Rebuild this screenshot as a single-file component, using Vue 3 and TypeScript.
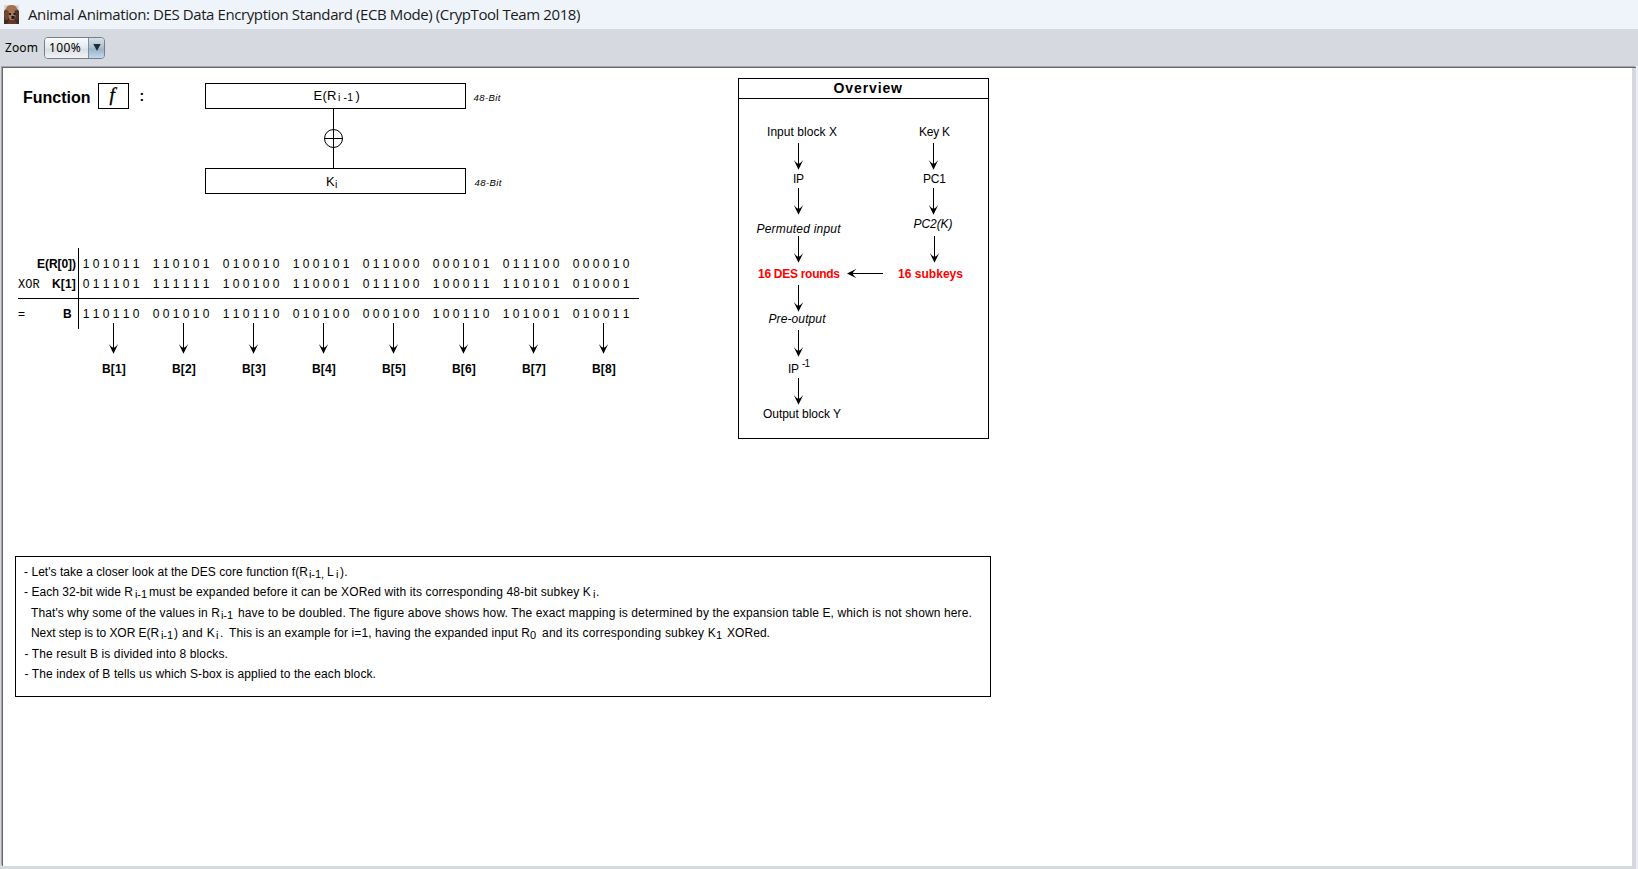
<script setup lang="ts">
interface Piece { t: string; w: number; gap?: number; sub?: boolean }
interface Label { t: string; x: number; y: number; w: number; cls?: string }
interface Arrow { x: number; y1: number; y2: number }

// Spreads a text run over a fixed advance width by adjusting its tracking.
const vFit = {
  mounted(el: HTMLElement, binding: { value: number }) {
    const natural = el.getBoundingClientRect().width
    const n = (el.textContent ?? '').length
    el.style.letterSpacing = `${(binding.value - natural) / n}px`
  },
}

const rows = [
  { op: '', name: 'E(R[0])', w: 39, end: 3, bits: '101011 110101 010010 100101 011000 000101 011100 000010' },
  { op: 'XOR', name: 'K[1]', w: 24, end: 2, bits: '011101 111111 100100 110001 011100 100011 110101 010001' },
  { op: '=', name: 'B', w: 9, end: 6, bits: '110110 001010 110110 010100 000100 100110 101001 010011' },
]

const labels: Label[] = [
  { t: 'Input block X', x: 767, y: 136, w: 70 },
  { t: 'IP', x: 793, y: 183, w: 11 },
  { t: 'Permuted input', x: 756.5, y: 233, w: 84, cls: 'italic' },
  { t: '16 DES rounds', x: 758, y: 278, w: 82, cls: 'red' },
  { t: 'Pre-output', x: 768.5, y: 323, w: 57, cls: 'italic' },
  { t: 'IP', x: 788, y: 373, w: 11 },
  { t: '-1', x: 802, y: 367, w: 8, cls: 'sup' },
  { t: 'Output block Y', x: 763, y: 418, w: 78 },
  { t: 'Key K', x: 919, y: 136, w: 31 },
  { t: 'PC1', x: 923, y: 183, w: 23 },
  { t: 'PC2(K)', x: 913.5, y: 228, w: 39, cls: 'italic' },
  { t: '16 subkeys', x: 898, y: 278, w: 65, cls: 'red' },
]

const arrows: Arrow[] = [
  { x: 798.5, y1: 143, y2: 169 },
  { x: 798.5, y1: 188, y2: 214 },
  { x: 798.5, y1: 236, y2: 262 },
  { x: 798.5, y1: 285, y2: 311 },
  { x: 798.5, y1: 330, y2: 356 },
  { x: 798.5, y1: 378, y2: 404 },
  { x: 933.5, y1: 143, y2: 169 },
  { x: 933.5, y1: 188, y2: 214 },
  { x: 934.5, y1: 236, y2: 262 },
]

const head = (x: number, y: number) =>
  `M${x - 4.7} ${y - 9}L${x} ${y + 0.7}L${x + 4.7} ${y - 9}L${x + 2.4} ${y - 6.4}L${x} ${y - 5}L${x - 2.4} ${y - 6.4}Z`

const notes: { top: number; indent: number; parts: Piece[] }[] = [
  { top: 5, indent: 8, parts: [
    { t: "- Let's take a closer look at the DES core function f(R", w: 284 },
    { t: 'i-1,', w: 15, gap: 1, sub: true },
    { t: 'L', w: 7, gap: 3 },
    { t: 'i', w: 3, gap: 2, sub: true },
    { t: ').', w: 8, gap: 1 },
  ] },
  { top: 0, indent: 8, parts: [
    { t: '- Each 32-bit wide R', w: 109 },
    { t: 'i-1', w: 12, gap: 2, sub: true },
    { t: 'must be expanded before it can be XORed with its corresponding 48-bit subkey K', w: 442, gap: 2 },
    { t: 'i', w: 3, gap: 2, sub: true },
    { t: '.', w: 3, gap: 0 },
  ] },
  { top: 1, indent: 15, parts: [
    { t: "That's why some of the values in R", w: 189 },
    { t: 'i-1', w: 12, gap: 1, sub: true },
    { t: 'have to be doubled. The figure above shows how. The exact mapping is determined by the expansion table E, which is not shown here.', w: 734, gap: 5 },
  ] },
  { top: 0, indent: 15, parts: [
    { t: 'Next step is to XOR E(R', w: 128 },
    { t: 'i-1', w: 12, gap: 2, sub: true },
    { t: ') and K', w: 41, gap: 1 },
    { t: 'i', w: 3, gap: 1, sub: true },
    { t: '.', w: 3, gap: 1 },
    { t: 'This is an example for i=1, having the expanded input R', w: 301, gap: 6 },
    { t: '0', w: 7, gap: 0, sub: true },
    { t: 'and its corresponding subkey K', w: 174, gap: 5 },
    { t: '1', w: 6, gap: 0, sub: true },
    { t: 'XORed.', w: 43, gap: 5 },
  ] },
  { top: 1, indent: 8.5, parts: [{ t: '- The result B is divided into 8 blocks.', w: 203.5 }] },
  { top: 0, indent: 8.5, parts: [{ t: '- The index of B tells us which S-box is applied to the each block.', w: 351.5 }] },
]
</script>

<template>
  <div class="window">
    <header class="titlebar">
      <svg class="app-icon" width="15" height="19" viewBox="0 0 15 19">
        <rect width="15" height="19" fill="#3a2c29" />
        <path d="M0 0H15V6L12 3H3L0 6Z" fill="#dcd6d3" />
        <ellipse cx="7.5" cy="4.5" rx="5.8" ry="4.5" fill="#a4714f" />
        <ellipse cx="2.5" cy="10" rx="2.5" ry="5" fill="#74462f" />
        <ellipse cx="12.5" cy="10" rx="2.5" ry="5" fill="#53352a" />
        <ellipse cx="8" cy="11" rx="3.4" ry="5" fill="#a07a64" />
        <rect x="5" y="8" width="2" height="2" fill="#2c1a16" />
        <rect x="9.5" y="8" width="2" height="2" fill="#2c1a16" />
        <rect x="7.5" y="11" width="3" height="3" fill="#1f1715" />
        <path d="M3 19L5 15H11L13 19Z" fill="#6d3528" />
      </svg>
      <span v-fit="552" class="title">Animal Animation: DES Data Encryption Standard (ECB Mode) (CrypTool Team 2018)</span>
    </header>

    <div class="toolbar">
      <span v-fit="33" class="zoom-label">Zoom</span>
      <div class="combo">
        <span class="value"><span v-fit="32">100%</span></span>
        <span class="drop">
          <svg width="8" height="7" viewBox="0 0 8 7"><path d="M0.3 0H7.7L4 7Z" fill="#222b33" /></svg>
        </span>
      </div>
    </div>

    <main class="canvas">
      <div class="top">
        <section class="left">
          <svg class="function" width="637" height="180" viewBox="3 68 637 180">
            <text class="heading" x="23" y="102.5" textLength="67.5">Function</text>
            <rect x="98.5" y="83.5" width="30" height="25" class="box" />
            <text class="fsym" x="109.5" y="100.5">f</text>
            <text class="colon" x="139.5" y="100.5">:</text>

            <rect x="205.5" y="83.5" width="260" height="25" class="box" />
            <text class="mid" x="313.5" y="100" textLength="23">E(R</text>
            <text class="small" x="338" y="101" textLength="15">i -1</text>
            <text class="mid" x="355.5" y="100">)</text>
            <text class="bit" x="473.5" y="101" textLength="27">48-Bit</text>

            <path d="M333.5 109V168M324 138.5H343" class="box" />
            <circle cx="333.5" cy="138.5" r="9" class="box" />

            <rect x="205.5" y="168.5" width="260" height="25" class="box" />
            <text class="mid" x="326" y="185.5">K</text>
            <text class="small" x="335" y="188">i</text>
            <text class="bit" x="474.5" y="186" textLength="27">48-Bit</text>
          </svg>

          <div class="xor">
            <div v-for="(r, i) in rows" :key="r.name" class="row" :class="'row' + (i + 1)">
              <div class="row-label">
                <span class="op" :class="{ mono: r.op === 'XOR' }">{{ r.op }}</span>
                <b v-fit="r.w" :class="'end' + r.end">{{ r.name }}</b>
              </div>
              <div class="bits">
                <span v-for="(g, k) in r.bits.split(' ')" :key="k" class="group">
                  <span v-for="(d, j) in g.split('')" :key="j" class="digit">{{ d }}</span>
                </span>
              </div>
            </div>
            <div class="outputs">
              <div v-for="n in 8" :key="n" class="output">
                <svg width="11" height="32" viewBox="0 0 11 32">
                  <path d="M5.5 0V28" class="box" />
                  <path :d="head(5.5, 30)" />
                </svg>
                <b v-fit="24">B[{{ n }}]</b>
              </div>
            </div>
          </div>
        </section>

        <section class="overview">
          <svg width="251" height="361" viewBox="738 78 251 361">
            <rect x="738.5" y="78.5" width="250" height="360" class="box" />
            <path d="M738 98.5H989" class="box" />
            <text class="otitle" x="833.5" y="92.5" textLength="68.5">Overview</text>
            <text v-for="(l, i) in labels" :key="i" class="node" :class="l.cls" :x="l.x" :y="l.y" :textLength="l.w">{{ l.t }}</text>
            <g v-for="(a, i) in arrows" :key="'a' + i">
              <path :d="`M${a.x} ${a.y1}V${a.y2 - 3}`" class="box" />
              <path :d="head(a.x, a.y2)" />
            </g>
            <path d="M883 273.5H850" class="box" />
            <path d="M856.5 268.8L847 273.5L856.5 278.2L854 275.8L852.5 273.5L854 271.2Z" />
          </svg>
        </section>
      </div>

      <section class="notes">
        <div v-for="(line, i) in notes" :key="i" class="note" :style="{ marginTop: line.top + 'px', paddingLeft: line.indent + 'px' }">
          <span
            v-for="(p, j) in line.parts"
            :key="j"
            v-fit="p.w"
            :class="{ sub: p.sub }"
            :style="{ marginLeft: (p.gap ?? 0) + 'px' }"
          >{{ p.t }}</span>
        </div>
      </section>
    </main>
  </div>
</template>

<style>
body {
  margin: 0;
  overflow: hidden;
}
</style>

<style scoped>
.window {
  display: flex;
  flex-direction: column;
  width: 1638px;
  height: 869px;
  box-sizing: border-box;
  border-right: 2px solid #eeeff2;
  background: #d6d9df;
  color: #000;
  font-family: "Liberation Sans", Arial, sans-serif;
  font-size: 12px;
}
.titlebar {
  display: flex;
  align-items: center;
  height: 29px;
  margin-right: -2px;
  padding-left: 4px;
  background: #eff4fb;
}
.app-icon {
  display: block;
  margin-top: -1px;
}
.title {
  margin-left: 9px;
  font: 15px/29px "Open Sans", sans-serif;
  color: #1a1a1a;
  white-space: nowrap;
}
.toolbar {
  display: flex;
  align-items: center;
  height: 37px;
  margin-right: -2px;
  padding-left: 5px;
  background: #d6d9df;
  font-family: "Noto Sans", sans-serif;
}
.zoom-label {
  line-height: 20px;
}
.combo {
  display: flex;
  width: 61px;
  height: 22px;
  box-sizing: border-box;
  margin-left: 6px;
  border: 1px solid #777d87;
  border-radius: 4px;
  overflow: hidden;
}
.value {
  width: 43px;
  padding-left: 4px;
  box-sizing: border-box;
  line-height: 20px;
  background: linear-gradient(#fafbfc, #e6e8ec 50%, #dadde3 55%, #f1f3f6);
}
.drop {
  display: flex;
  flex: 1;
  align-items: center;
  justify-content: center;
  border-left: 1px solid #7890a5;
  background: linear-gradient(#d5e0ea, #a9bfd1 50%, #98b3c8 55%, #c3d9eb);
}
.canvas {
  box-sizing: border-box;
  width: 1634px;
  height: 799px;
  margin-top: 1px;
  margin-left: 2px;
  border-top: 1px solid #66686b;
  border-left: 1px solid #66686b;
  background: linear-gradient(#fff, #fff) left top / 1629px 100% no-repeat #d6d9df;
  box-shadow: -1px -1px 0 #a3a5a9;
}
.top {
  display: flex;
  height: 488px;
}
.left {
  width: 735px;
}
.function {
  display: block;
}
.box {
  fill: none;
  stroke: #000;
  stroke-width: 1;
}
.heading {
  font-size: 16px;
  font-weight: bold;
}
.colon {
  font-size: 14px;
  font-weight: bold;
}
.fsym {
  font: italic 19px "Liberation Serif", serif;
  stroke: #000;
  stroke-width: 0.4px;
}
.mid {
  font-size: 13px;
}
.small {
  font-size: 10.5px;
}
.bit {
  font-size: 9.5px;
  font-style: italic;
}
.xor {
  width: 621px;
  margin-left: 15px;
}
.row {
  display: flex;
  box-sizing: border-box;
  line-height: 20px;
}
.row1 {
  height: 26px;
}
.row2 {
  height: 25px;
  border-bottom: 1px solid #000;
}
.row3 {
  height: 24px;
}
.row-label {
  display: flex;
  justify-content: space-between;
  box-sizing: border-box;
  width: 61px;
  border-right: 1px solid #000;
}
.row1 .row-label,
.row1 .bits {
  padding-top: 6px;
}
.row3 .row-label {
  height: 30px;
  padding-top: 5px;
}
.row3 .bits {
  padding-top: 5px;
}
.mono {
  padding-top: 1px;
  font-family: "Liberation Mono", monospace;
}
.end2 {
  margin-right: 2px;
}
.end3 {
  margin-right: 2px;
}
.end6 {
  margin-right: 6px;
}
.bits {
  display: flex;
  padding-left: 2px;
  gap: 10px;
}
.group {
  display: flex;
}
.digit {
  width: 10px;
  text-align: center;
}
.outputs {
  display: flex;
  padding-left: 60px;
}
.output {
  display: flex;
  flex: none;
  flex-direction: column;
  align-items: center;
  width: 70px;
  line-height: 20px;
}
.output svg {
  display: block;
}
.output b {
  margin-top: 4px;
  margin-left: 2px;
}
.overview {
  padding-top: 10px;
}
.overview svg {
  display: block;
}
.otitle {
  font-size: 14px;
  font-weight: bold;
}
.node {
  font-size: 12px;
}
.italic {
  font-style: italic;
}
.red {
  fill: #f00;
  font-weight: bold;
}
.sup {
  font-size: 10px;
}
.notes {
  box-sizing: border-box;
  width: 976px;
  height: 141px;
  margin-left: 12px;
  border: 1px solid #000;
}
.note {
  display: flex;
  height: 20px;
  line-height: 20px;
  white-space: nowrap;
}
.sub {
  padding-top: 2px;
  font-size: 11px;
}
</style>
